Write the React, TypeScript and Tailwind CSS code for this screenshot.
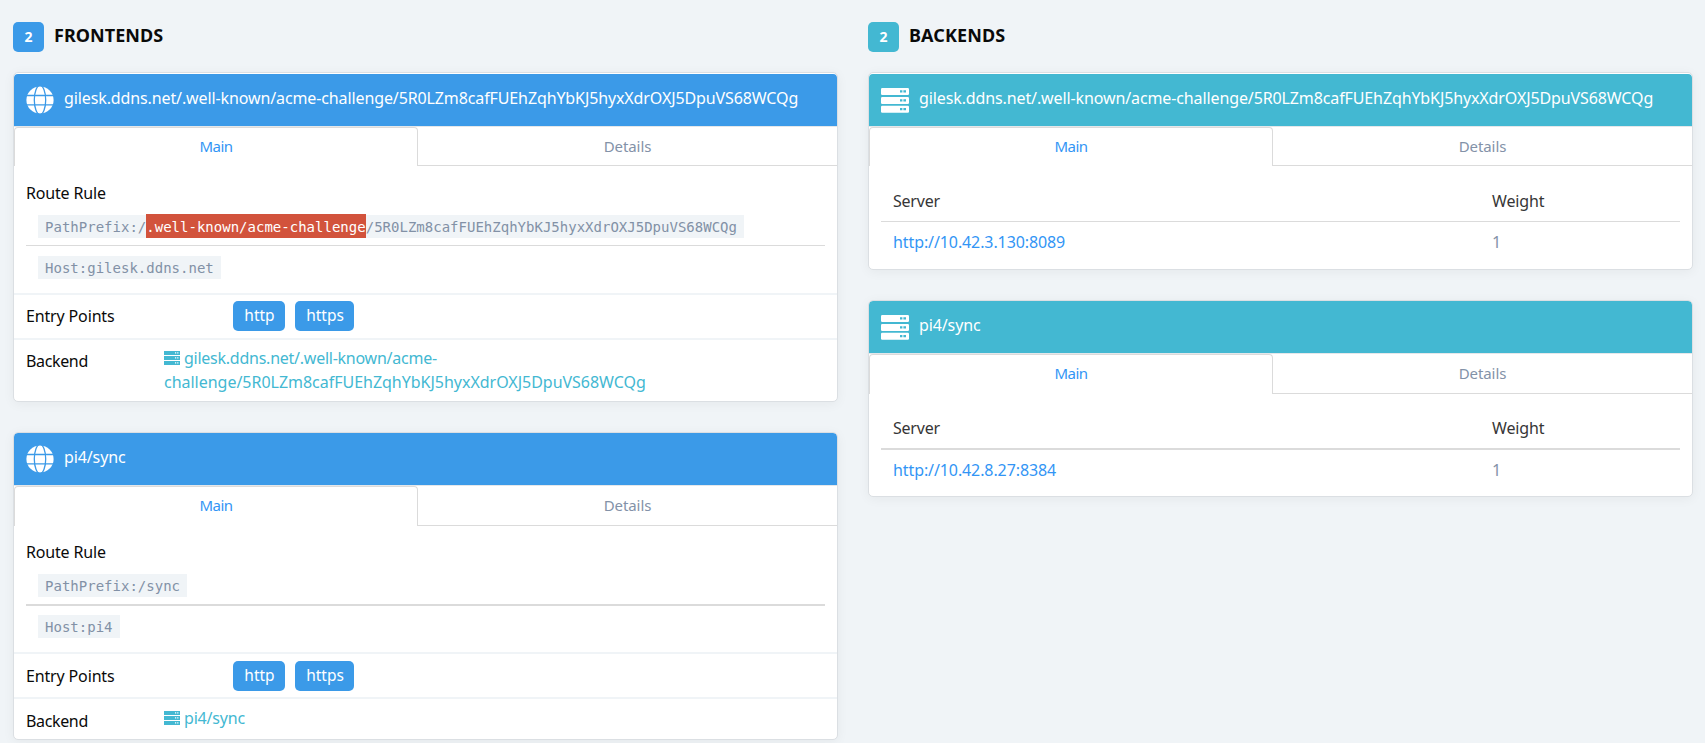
import type { ReactNode } from "react";

const LONG = "gilesk.ddns.net/.well-known/acme-challenge/5R0LZm8cafFUEhZqhYbKJ5hyxXdrOXJ5DpuVS68WCQg";

function Globe() {
  return (
    <svg viewBox="0 0 28 28" className="h-7 w-7 shrink-0">
      <circle cx="14" cy="14" r="13.6" fill="#fff" />
      <g fill="none" stroke="#3b9ae8" strokeWidth="1.3">
        <path d="M0 9.5h28M0 18.8h28" />
        <ellipse cx="14" cy="14" rx="5.7" ry="14.6" />
      </g>
    </svg>
  );
}

function Servers() {
  return (
    <svg viewBox="0 0 28 25" className="h-[25px] w-7 shrink-0">
      {[0, 9, 17.7].map((y) => (
        <g key={y}>
          <rect x="0" y={y} width="28" height="7" rx="1.2" fill="#fff" />
          <path d={`M19 ${y + 3.4}h2.4M22.4 ${y + 3.4}h2.6`} stroke="#43b8d2" strokeWidth="2.2" />
        </g>
      ))}
    </svg>
  );
}

function SmallServers() {
  return (
    <svg viewBox="0 0 16 14" className="mr-1 inline-block h-[14px] w-4 align-[-1px]">
      {[0, 5, 10].map((y) => (
        <g key={y}>
          <rect x="0" y={y} width="16" height="4" fill="#43b8d2" />
          <path d={`M11 ${y + 1.9}h1.2M13.2 ${y + 1.9}h1.2`} stroke="#fff" strokeWidth="1.2" />
        </g>
      ))}
    </svg>
  );
}

function Heading({ tone, children }: { tone: string; children: ReactNode }) {
  return (
    <div className="flex h-[30px] items-center">
      <span className={`flex h-[30px] w-[31px] items-center justify-center rounded-[5px] pb-px text-[14px] font-bold text-white ${tone}`}>2</span>
      <h2 className="-mt-[4px] ml-[10px] text-[18px] leading-6 font-bold text-[#0a0a0a]">{children}</h2>
    </div>
  );
}

function Card({ tone, icon, title, size, tabHeight, children }: { tone: string; icon: ReactNode; title: string; size: string; tabHeight: string; children: ReactNode }) {
  return (
    <article className={`overflow-hidden rounded-[5px] border border-[#dbdfe3] bg-white shadow-[0_2px_12px_rgba(0,0,0,0.05)] ${size}`}>
      <header className={`flex h-[52px] items-center rounded-t px-3 ${tone}`}>
        {icon}
        <span className="-mt-[5px] ml-[10px] text-[16px] leading-6 tracking-[-0.115px] whitespace-nowrap text-white">{title}</span>
      </header>
      <div className={`flex border-t border-[#e4e7ea] text-[15px] ${tabHeight}`}>
        <div className="flex w-[404px] items-start justify-center rounded-t border-x border-t border-[#dbdbdb] pt-[7px] leading-[22px] tracking-[-0.5px] text-[#3295f5]">Main</div>
        <div className="flex flex-1 items-start justify-center border-b border-[#dbdbdb] pt-2 leading-[22px] tracking-[-0.1px] text-[#8392a8]">Details</div>
      </div>
      {children}
    </article>
  );
}

function Code({ children }: { children: ReactNode }) {
  return <code className="ml-3 flex h-[23px] w-fit items-center bg-[#f0f4f7] px-[7px] pt-[2px] font-['DejaVu_Sans_Mono',monospace] text-[14px] leading-[21px] tracking-[0.01px] whitespace-pre text-[#8291a6]">{children}</code>;
}

function Label({ children }: { children: ReactNode }) {
  return <span className="text-[16px] leading-6 text-[#0a0a0a]">{children}</span>;
}

interface FrontendProps {
  path: ReactNode;
  host: string;
  backend: ReactNode;
  ruleHeight: string;
  routeHeight: string;
  tagTop: string;
  labelTop: string;
  linkTop: string;
}

function FrontendBody({ path, host, backend, ruleHeight, routeHeight, tagTop, labelTop, linkTop }: FrontendProps) {
  return (
    <>
      <section className={`px-3 ${routeHeight}`}>
        <div className="h-[34px] tracking-[-0.17px]"><Label>Route Rule</Label></div>
        <Code>{path}</Code>
        <hr className={`mt-[7px] border-0 bg-[#dbdbdb] ${ruleHeight}`} />
        <Code>{host}</Code>
      </section>
      <section className={`flex h-[45px] items-start border-t-2 border-[#f0f4f7] px-3 ${tagTop}`}>
        <div className="w-[207px] pt-[3px] tracking-[-0.15px]"><Label>Entry Points</Label></div>
        <span className="flex h-[30px] w-[52px] items-center justify-center rounded-[5px] bg-[#3b9ae8] pl-px text-[15.5px] text-white">http</span>
        <span className="ml-[10px] flex h-[30px] w-[59px] items-center justify-center rounded-[5px] bg-[#3b9ae8] pl-px text-[15.5px] text-white">https</span>
      </section>
      <section className="flex items-start border-t-2 border-[#f0f4f7] px-3">
        <div className={`w-[138px] tracking-[-0.35px] ${labelTop}`}><Label>Backend</Label></div>
        <div className={`text-[16px] leading-6 tracking-[-0.2px] whitespace-nowrap text-[#43b8d2] ${linkTop}`}>
          <SmallServers />
          {backend}
        </div>
      </section>
    </>
  );
}

function BackendBody({ url, top, rule }: { url: string; top: string; rule: string }) {
  return (
    <section className={`px-3 text-[16px] leading-6 ${top}`}>
      <div className="flex h-8 px-3 text-[#363636]">
        <span className="w-[599px] tracking-[-0.22px]">Server</span>
        <span className="tracking-[-0.15px]">Weight</span>
      </div>
      <hr className={`border-0 bg-[#dbdbdb] ${rule}`} />
      <div className="flex px-3 pt-2">
        <a className="w-[599px] tracking-[-0.1px] text-[#3295f5]">{url}</a>
        <span className="text-[#8392a8]">1</span>
      </div>
    </section>
  );
}

export default function App() {
  return (
    <main className="flex h-[743px] gap-[30px] overflow-hidden bg-[#f0f4f7] px-[13px] pt-[22px] font-['Noto_Sans',sans-serif]">
      <div className="w-[825px] shrink-0">
        <Heading tone="bg-[#3b9ae8]"><span className="tracking-[0.05px]">FRONTENDS</span></Heading>
        <div className="mt-5 flex flex-col gap-[30px]">
          <Card tone="bg-[#3b9ae8]" icon={<Globe />} title={LONG} size="h-[330px] pt-px" tabHeight="h-10">
            <FrontendBody
              path={
                <>
                  PathPrefix:/<span className="-mt-[3px] flex h-6 items-center bg-[#d2533c] pt-[2px] text-white">.well-known/acme-challenge</span>/5R0LZm8cafFUEhZqhYbKJ5hyxXdrOXJ5DpuVS68WCQg
                </>
              }
              host="Host:gilesk.ddns.net"
              ruleHeight="mb-[10px] h-px"
              routeHeight="h-[127px] pt-[15px]"
              tagTop="pt-[6px]"
              labelTop="pt-[9px]"
              linkTop="pt-[6px]"
              backend={
                <>
                  <span className="tracking-[-0.25px]">gilesk.ddns.net/.well-known/acme-</span>
                  <br />
                  <span className="tracking-[-0.02px]">challenge/5R0LZm8cafFUEhZqhYbKJ5hyxXdrOXJ5DpuVS68WCQg</span>
                </>
              }
            />
          </Card>
          <Card tone="bg-[#3b9ae8]" icon={<Globe />} title="pi4/sync" size="h-[308px]" tabHeight="h-[41px]">
            <FrontendBody
              path="PathPrefix:/sync"
              host="Host:pi4"
              ruleHeight="mb-[9px] h-[2px]"
              routeHeight="h-[126px] pt-[14px]"
              tagTop="pt-[7px]"
              labelTop="pt-[10px]"
              linkTop="pt-[7px]"
              backend="pi4/sync"
            />
          </Card>
        </div>
      </div>
      <div className="w-[825px] shrink-0">
        <Heading tone="bg-[#43b8d2]"><span className="tracking-[0.1px]">BACKENDS</span></Heading>
        <div className="mt-5 flex flex-col gap-[30px]">
          <Card tone="bg-[#43b8d2]" icon={<Servers />} title={LONG} size="h-[198px] pt-px" tabHeight="h-10">
            <BackendBody url="http://10.42.3.130:8089" top="pt-[23px]" rule="h-px" />
          </Card>
          <Card tone="bg-[#43b8d2]" icon={<Servers />} title="pi4/sync" size="h-[197px]" tabHeight="h-[41px]">
            <BackendBody url="http://10.42.8.27:8384" top="pt-[22px]" rule="h-[2px]" />
          </Card>
        </div>
      </div>
    </main>
  );
}
